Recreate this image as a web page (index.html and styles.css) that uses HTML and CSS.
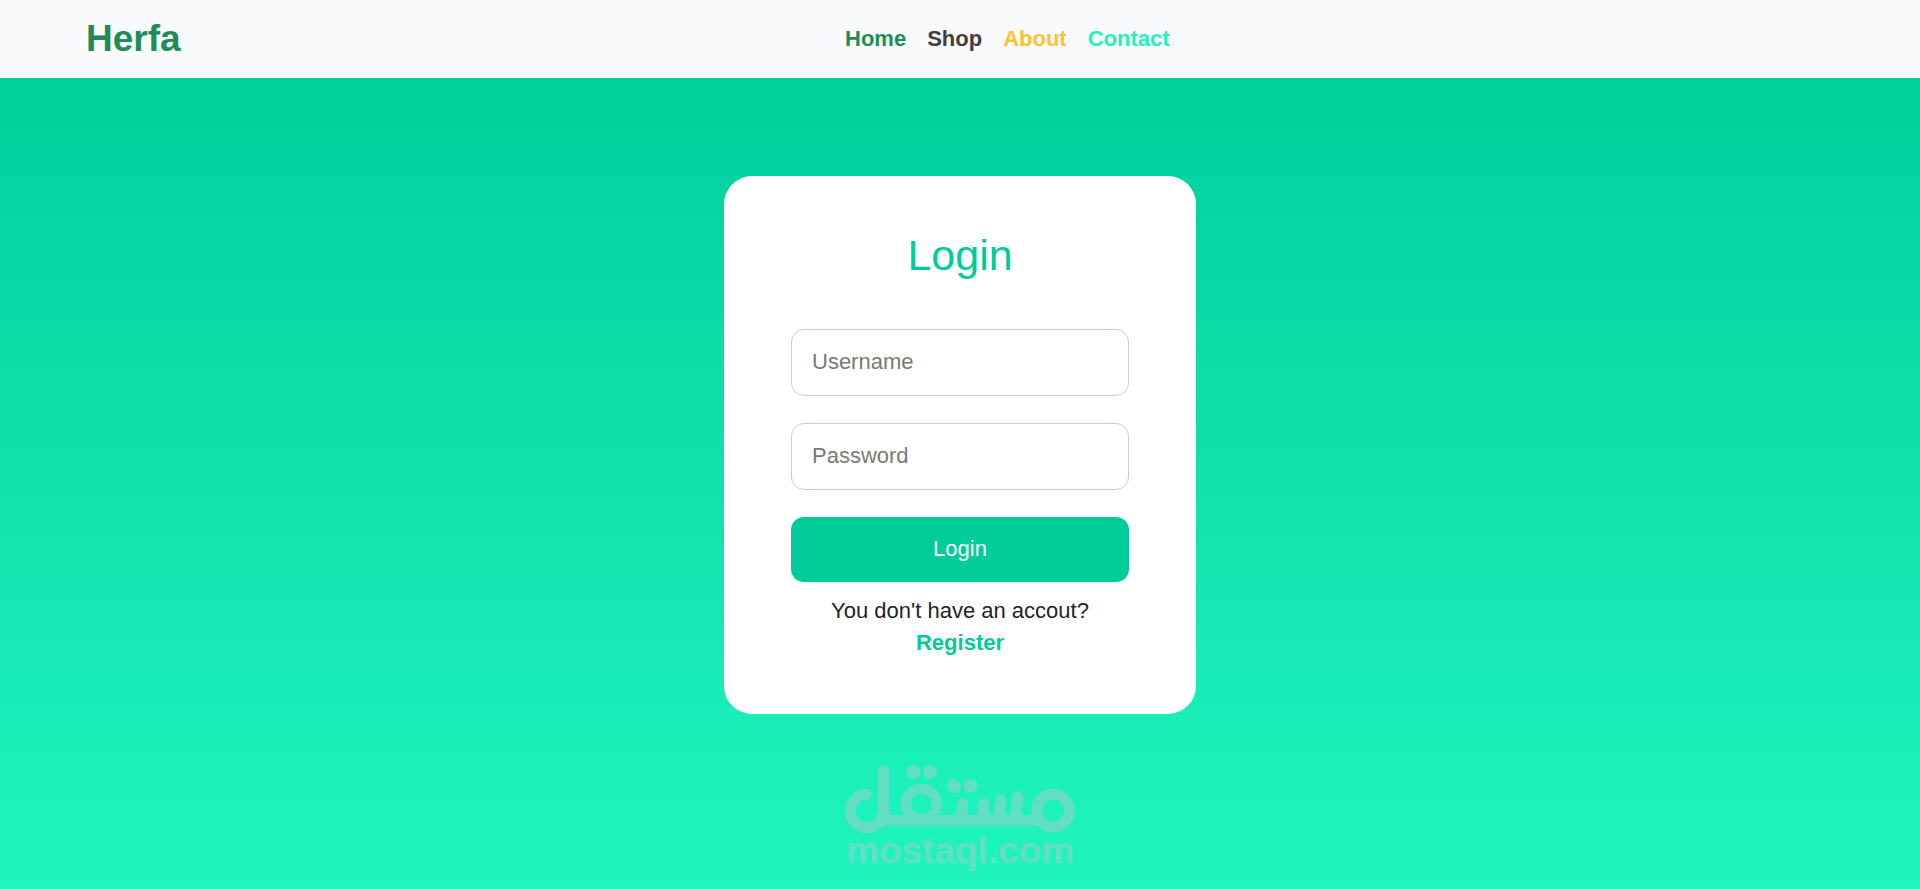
FILE: index.html
```html
<!DOCTYPE html>
<html lang="en">
<head>
<meta charset="utf-8">
<meta name="viewport" content="width=device-width, initial-scale=1">
<title>Herfa - Login</title>
<link rel="stylesheet" href="styles.css">
</head>
<body>
<header class="navbar">
  <a class="brand" href="#">Herfa</a>
  <nav class="nav-links">
    <a class="nav-home" href="#">Home</a>
    <a class="nav-shop" href="#">Shop</a>
    <a class="nav-about" href="#">About</a>
    <a class="nav-contact" href="#">Contact</a>
  </nav>
</header>
<main class="page">
  <form class="card">
    <h1 class="title">Login</h1>
    <input class="field" type="text" placeholder="Username" aria-label="Username">
    <input class="field" type="password" placeholder="Password" aria-label="Password">
    <button class="submit" type="submit">Login</button>
    <p class="hint">You don't have an accout?</p>
    <a class="register" href="#">Register</a>
  </form>
  <div class="mark">
    <svg class="mark-logo" viewBox="72 45 696 204" role="img" aria-label="مستقل">
      <g fill="none" stroke="currentColor" stroke-linecap="round">
        <path stroke-width="33" d="M139 133A50 50 0 1 0 191 182V62"/>
        <path stroke-width="33" stroke-linecap="butt" d="M178 211H660"/>
        <circle cx="304" cy="162" r="46" stroke-width="31"/>
        <circle cx="699" cy="182" r="49" stroke-width="33"/>
        <path stroke-width="33" d="M428 161L424 205M492 161L488 205M543 149L536 205M593 141L586 205"/>
      </g>
      <g fill="currentColor">
        <circle cx="281" cy="67" r="21"/><circle cx="330" cy="67" r="21"/>
        <circle cx="402" cy="108" r="21"/><circle cx="452" cy="108" r="21"/>
      </g>
    </svg>
    <span class="mark-name">mostaql.com</span>
  </div>
</main>
</body>
</html>
```
FILE: styles.css
```css
* {
  box-sizing: border-box;
}

body {
  margin: 0;
  min-height: 100vh;
  display: flex;
  flex-direction: column;
  font-family: "Liberation Sans", Arial, sans-serif;
  font-size: 22px;
  line-height: 32px;
  color: #212529;
}

a {
  text-decoration: none;
}

.navbar {
  display: flex;
  align-items: center;
  padding: 11px 86px;
  background: #f8fafc;
  font-weight: 700;
}

.brand {
  font-size: 37px;
  line-height: 56px;
  color: #1f8b59;
}

.nav-links {
  flex: 1;
  display: flex;
  justify-content: center;
  gap: 21px;
}

.nav-home { color: #1f8b59; }
.nav-shop { color: #453c3f; }
.nav-about { color: #ffc132; }
.nav-contact { color: #24f2bd; }

.page {
  flex: 1;
  display: flex;
  flex-direction: column;
  align-items: center;
  gap: 51px;
  padding: 98px 16px 14px;
  background: linear-gradient(#00cf9c, #20f5c0);
}

.card {
  width: 100%;
  max-width: 472px;
  display: flex;
  flex-direction: column;
  padding: 54px 67px;
  border-radius: 28px;
  background: #fff;
  text-align: center;
}

.title {
  margin: 0 0 49px;
  font-size: 43px;
  font-weight: 400;
  line-height: 50px;
  color: #00cc99;
}

.field {
  width: 100%;
  height: 67px;
  margin: 0 0 27px;
  padding: 0 20px 2px;
  border: 1px solid #c8d0cc;
  border-radius: 13px;
  background: #fff;
  font: inherit;
  color: inherit;
}

.field::placeholder {
  color: #7a7a74;
}

.submit {
  height: 65px;
  margin: 0 0 13px;
  padding: 0 20px 2px;
  border: 0;
  border-radius: 13px;
  background: #00cc99;
  font: inherit;
  color: #fff;
}

.hint {
  margin: 0;
}

.register {
  margin: 0 0 1px;
  font-weight: 700;
  color: #00cc99;
}

.mark {
  display: flex;
  flex-direction: column;
  align-items: center;
  color: #62dec3;
}

.mark-logo {
  width: 232px;
  height: 68px;
}

.mark-name {
  font-size: 37px;
  font-weight: 700;
  line-height: 36px;
}
```
